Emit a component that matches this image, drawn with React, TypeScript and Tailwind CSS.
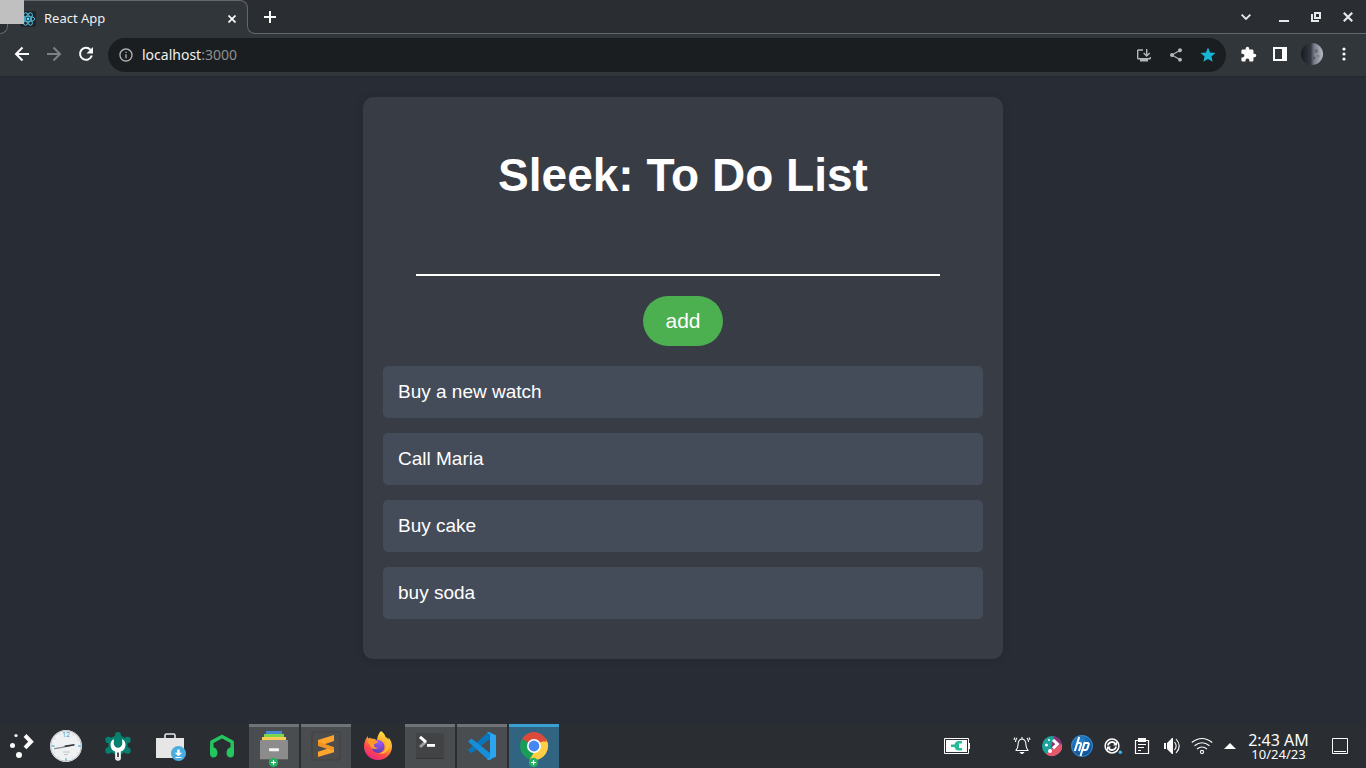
import React, { useState } from "react";
import { MdExtension, MdInfoOutline, MdShare, MdStar } from "react-icons/md";

type IconButtonProps = {
  label: string;
  className?: string;
  children: React.ReactNode;
};

function IconButton({ label, className = "", children }: IconButtonProps) {
  return (
    <button
      type="button"
      aria-label={label}
      className={`flex h-8 w-8 shrink-0 items-center justify-center ${className}`}
    >
      {children}
    </button>
  );
}

function ReactLogo() {
  return (
    <svg viewBox="0 0 16 16" className="h-4 w-4 rounded-xs bg-[#20232a]" aria-hidden="true">
      <g fill="none" stroke="#4fb9d8" strokeWidth="1">
        <ellipse cx="8" cy="8" rx="6.8" ry="2.7" />
        <ellipse cx="8" cy="8" rx="6.8" ry="2.7" transform="rotate(60 8 8)" />
        <ellipse cx="8" cy="8" rx="6.8" ry="2.7" transform="rotate(120 8 8)" />
      </g>
      <circle cx="8" cy="8" r="1.4" fill="#61dafb" />
    </svg>
  );
}

function TabStrip() {
  return (
    <header className="relative flex h-[34px] items-end bg-[#2a2e32]">
      <div className="h-2.5 w-2 bg-[#31363b]">
        <div className="h-full w-full rounded-br-lg border-r border-b border-[#64686c] bg-[#2a2e32]" />
      </div>
      <div className="flex h-full w-60 flex-col">
        <div className="flex flex-1 items-center rounded-t-lg border-t border-r border-[#64686c] bg-[#31363b] pt-2 pr-[7px] pl-3">
          <ReactLogo />
          <a href="#tab" className="ml-2 flex-1 text-[13px] text-[#eff0f1]">
            React App
          </a>
          <button type="button" aria-label="Close tab" className="flex h-4 w-4 items-center justify-center">
            <svg viewBox="0 0 8 8" className="h-2 w-2" stroke="#fcfcfc" strokeWidth="1.7" aria-hidden="true">
              <path d="M.5.5l7 7M7.5.5l-7 7" />
            </svg>
          </button>
        </div>
        <div className="h-2 bg-[#31363b]" />
      </div>
      <div className="-ml-px h-[9px] w-[9px] bg-[#31363b]">
        <div className="h-full w-full rounded-bl-lg border-b border-l border-[#64686c] bg-[#2a2e32]" />
      </div>
      <div className="flex h-full flex-1 items-center border-b border-[#64686c] pr-0.5">
        <button type="button" aria-label="New tab" className="flex h-7 w-7 items-center justify-center">
          <svg viewBox="0 0 12 12" className="h-3 w-3" stroke="#fcfcfc" strokeWidth="2" aria-hidden="true">
            <path d="M6 0v12M0 6h12" />
          </svg>
        </button>
        <div className="ml-auto flex text-[#e6e8ea]">
          <IconButton label="Search tabs" className="mr-[7px]">
            <svg viewBox="0 0 10 6" className="h-1.5 w-2.5" fill="none" stroke="currentColor" strokeWidth="1.8" aria-hidden="true">
              <path d="M.6.6L5 5l4.4-4.4" />
            </svg>
          </IconButton>
          <IconButton label="Minimize" className="-ml-px">
            <svg viewBox="0 0 10 10" className="h-2.5 w-2.5" fill="currentColor" aria-hidden="true">
              <path d="M0 8h10v2H0z" />
            </svg>
          </IconButton>
          <IconButton label="Restore">
            <svg viewBox="0 0 10 10" className="h-2.5 w-2.5" fill="none" stroke="currentColor" strokeWidth="2" aria-hidden="true">
              <path d="M4 1h5v5H4z" />
              <path d="M1 2v7h7" />
            </svg>
          </IconButton>
          <IconButton label="Close window">
            <svg viewBox="0 0 10 10" className="h-2.5 w-2.5" stroke="currentColor" strokeWidth="2.2" aria-hidden="true">
              <path d="M.8.8l8.4 8.4M9.2.8L.8 9.2" />
            </svg>
          </IconButton>
        </div>
      </div>
      <div className="absolute top-0 left-0 h-6 w-6 bg-[#c0c0c0]" />
    </header>
  );
}

function Toolbar() {
  return (
    <nav className="flex items-center border-b border-[#25282c] bg-[#31363b] px-1.5 py-1 text-[#fcfcfc]">
      <div className="flex pb-0.5">
        <IconButton label="Back">
          <svg viewBox="0 0 16 16" className="h-4 w-4" fill="none" stroke="currentColor" strokeWidth="2" aria-hidden="true">
            <path d="M15 8H2.500M8.500 1.500L2 8l6.500 6.500" />
          </svg>
        </IconButton>
        <IconButton label="Forward" className="text-[#7d8184]">
          <svg viewBox="0 0 16 16" className="h-4 w-4" fill="none" stroke="currentColor" strokeWidth="2" aria-hidden="true">
            <path d="M1 8h12.500M7.500 1.500L14 8l-6.500 6.500" />
          </svg>
        </IconButton>
        <IconButton label="Reload">
          <svg viewBox="0 0 16 16" className="h-4 w-4" aria-hidden="true">
            <path d="M12.500 3.800A6 6 0 1 0 13.800 9.500" fill="none" stroke="currentColor" strokeWidth="2" />
            <path d="M15 1v6.500H8.500z" fill="currentColor" />
          </svg>
        </IconButton>
      </div>
      <div className="mx-1.5 flex h-[34px] flex-1 items-center rounded-full bg-[#1b1e20] pr-0.5 pl-2.5 text-[#b4b6b8]">
        <MdInfoOutline size={16} className="text-[#b0b2b4]" />
        <p className="ml-2 flex-1 pb-0.5 text-[14px] text-[#8d8f91]">
          <span className="text-[#eff0f1]">localhost</span>:3000
        </p>
        <IconButton label="Install app">
          <svg viewBox="0 0 14 13" className="h-[13px] w-3.5" fill="none" stroke="currentColor" strokeWidth="1.4" aria-hidden="true">
            <path d="M6 1H1.200q-.5 0-.5.500v7.800q0 .5.5.5h11.600q.5 0 .5-.5V8" />
            <path d="M9.700 0v6.500M6.700 4l3 3 3-3" />
            <path d="M3 10h8v2.500H3z" fill="currentColor" stroke="none" />
          </svg>
        </IconButton>
        <IconButton label="Share">
          <MdShare size={16} />
        </IconButton>
        <IconButton label="Bookmark" className="text-[#16b5d3]">
          <MdStar size={18} />
        </IconButton>
      </div>
      <div className="flex pb-0.5">
        <IconButton label="Extensions">
          <MdExtension size={17} />
        </IconButton>
        <IconButton label="Side panel">
          <svg viewBox="0 0 14 14" className="h-3.5 w-3.5" aria-hidden="true">
            <path d="M0 0h14v14H0zM2 2v10h7V2z" fill="currentColor" fillRule="evenodd" />
          </svg>
        </IconButton>
        <IconButton label="Profile">
          <svg viewBox="0 0 22 22" className="h-[22px] w-[22px]" aria-hidden="true">
            <defs>
              <linearGradient id="moon" x1="0" x2="1">
                <stop offset="0" stopColor="#17191f" />
                <stop offset=".45" stopColor="#353942" />
                <stop offset=".6" stopColor="#787d8a" />
                <stop offset="1" stopColor="#b8bcc6" />
              </linearGradient>
            </defs>
            <circle cx="11" cy="11" r="11" fill="url(#moon)" />
            <circle cx="15" cy="8" r="2" fill="#656b78" />
            <circle cx="17" cy="13" r="1.5" fill="#7b808d" />
            <circle cx="13" cy="15" r="1.5" fill="#555b68" />
          </svg>
        </IconButton>
        <IconButton label="Menu">
          <svg viewBox="0 0 4 14" className="h-3.5 w-1" fill="currentColor" aria-hidden="true">
            <circle cx="2" cy="2" r="1.6" />
            <circle cx="2" cy="7" r="1.6" />
            <circle cx="2" cy="12" r="1.6" />
          </svg>
        </IconButton>
      </div>
    </nav>
  );
}

function TodoCard() {
  const [items, setItems] = useState(["Buy a new watch", "Call Maria", "Buy cake", "buy soda"]);
  const [draft, setDraft] = useState("");

  function addItem(event: React.FormEvent) {
    event.preventDefault();
    if (draft.trim()) {
      setItems([...items, draft.trim()]);
      setDraft("");
    }
  }

  return (
    <section className="w-full max-w-[640px] rounded-[10px] bg-[#383c44] px-5 pt-[50px] pb-10 font-['Liberation_Sans',Arial,sans-serif] text-white shadow-[0_0_10px_rgba(0,0,0,0.1)]">
      <h1 className="text-center text-[46px] leading-[56px] font-bold">Sleek: To Do List</h1>
      <form onSubmit={addItem} className="mt-8 flex flex-col items-center gap-5">
        <input
          aria-label="New task"
          value={draft}
          onChange={(event) => setDraft(event.target.value)}
          className="mr-2.5 h-[41px] w-full max-w-[524px] border-b-2 border-white bg-transparent px-2.5 text-[20px] outline-none"
        />
        <button type="submit" className="h-[50px] w-20 rounded-[25px] bg-[#4caf50] text-[21px]">
          add
        </button>
      </form>
      <ul className="mt-5 flex flex-col gap-[15px]">
        {items.map((item) => (
          <li key={item} className="rounded-[5px] bg-[#454c59] p-[15px] text-[19px] leading-[22px]">
            {item}
          </li>
        ))}
      </ul>
    </section>
  );
}

function PlusBadge({ cx, cy }: { cx: number; cy: number }) {
  return (
    <g>
      <circle cx={cx} cy={cy} r="4.7" fill="#27ae60" />
      <path d={`M${cx - 2.5} ${cy}h5M${cx} ${cy - 2.5}v5`} stroke="#fff" strokeWidth="1.2" />
    </g>
  );
}

function ClockIcon() {
  return (
    <>
      <circle cx="25" cy="22" r="16" fill="#eff1f2" />
      <circle cx="25" cy="22" r="15.3" fill="none" stroke="#c2c6c9" strokeWidth="1" />
      <circle cx="25" cy="22" r="13" fill="none" stroke="#aab0b4" strokeWidth="1" strokeDasharray=".6 6.2" />
      <text x="25" y="12.5" fontSize="7" textAnchor="middle" fill="#3d9cc8">12</text>
      <path d="M10.5 22h3M37 22h3M25 34v3" stroke="#6fb9d9" strokeWidth="1.3" />
      <path d="M22 28h7M23 30.5h4" stroke="#b5babd" strokeWidth=".8" />
      <path d="M13 25l11-2" stroke="#8d9296" strokeWidth="1.2" />
      <path d="M13 24.5L33 21" stroke="#8d9296" strokeWidth=".8" />
      <path d="M23.5 21.5l10-1.5v1.5L24 23.2z" fill="#2f3437" />
    </>
  );
}

function SettingsIcon() {
  return (
    <>
      <g fill="#07806f">
        <path d="M25 10l9.500 5.500v11L25 32l-9.500-5.500v-11z" />
        <circle cx="25" cy="11" r="3" />
        <circle cx="34.500" cy="16" r="3.200" />
        <circle cx="34.500" cy="26.500" r="3.200" />
        <circle cx="15.500" cy="16" r="3.200" />
        <circle cx="15.500" cy="26.500" r="3.200" />
        <circle cx="25" cy="31" r="3" />
      </g>
      <path d="M20.800 15a7 7 0 0 0 1.400 12.500V34a2.800 2.800 0 0 0 5.600 0v-6.500A7 7 0 0 0 29.200 15v4.500a4.200 4.200 0 0 1-8.400 0z" fill="#fff" />
      <path d="M25 28.500V33" stroke="#4d5052" strokeWidth="2" />
      <path d="M22.200 33.500h5.600v1.500q-2.800 1.500-5.600 0z" fill="#d9dcdd" />
    </>
  );
}

function StoreIcon() {
  return (
    <>
      <path d="M20 14v-2.500q0-1.500 1.500-1.500h7q1.500 0 1.500 1.500V14" fill="none" stroke="#e6e6e6" strokeWidth="1.600" />
      <path d="M11 14h28v20H11z" fill="#e6e6e6" />
      <circle cx="33.500" cy="29.500" r="7.500" fill="#4badde" />
      <path d="M32.300 25.500h2.400v3.300h2.600l-3.800 3.500-3.800-3.500h2.600zM30.500 33h6v1h-6z" fill="#fff" />
    </>
  );
}

function HeadphonesIcon() {
  return (
    <>
      <path d="M14.800 29V18L25 12.500 35.200 18v11" fill="none" stroke="#25c55f" strokeWidth="3.400" strokeLinejoin="round" />
      <path d="M13 23.500q7-1 7.500 5 0 5-4.500 5-3-.5-3-4zM37 23.500q-7-1-7.500 5 0 5 4.500 5 3-.5 3-4z" fill="#25c55f" />
    </>
  );
}

function FilesIcon() {
  return (
    <>
      <path d="M17 7h16v3.500H17z" fill="#4489d1" />
      <path d="M15 10h20v3.500H15z" fill="#7bd652" />
      <path d="M13 13h24v4H13z" fill="#fbcb52" />
      <rect x="11" y="16" width="28" height="20" rx="1" fill="#8c8c8c" />
      <path d="M11 35.500h28" stroke="#5f5f5f" />
      <rect x="20" y="24.200" width="10" height="3" rx=".8" fill="#f4f4f4" />
      <PlusBadge cx={24.500} cy={38.500} />
    </>
  );
}

function SublimeIcon() {
  return (
    <>
      <rect x="11" y="8" width="28" height="28" rx="1.500" fill="#4c4c4c" stroke="#3c3e40" strokeWidth=".8" />
      <path d="M17 16l16-5v6l-9.500 3.200L33 23.300v5L17 33v-5.300l9.300-3L17 21.700z" fill="#ffa42c" />
      <path d="M17 21.700v-4l16 5.600v3L26.300 24.700z" fill="#f29422" />
    </>
  );
}

function FirefoxIcon() {
  return (
    <>
      <defs>
        <linearGradient id="flame" x1=".8" y1="0" x2=".25" y2="1">
          <stop offset="0" stopColor="#fff04b" />
          <stop offset=".38" stopColor="#ffab27" />
          <stop offset=".7" stopColor="#ff4a48" />
          <stop offset="1" stopColor="#e9218d" />
        </linearGradient>
        <radialGradient id="globe" cx=".6" cy=".2" r=".9">
          <stop offset="0" stopColor="#a158f3" />
          <stop offset="1" stopColor="#5439b2" />
        </radialGradient>
      </defs>
      <path d="M28 7c2.400 1.400 4 3.800 4.500 6 1.500.6 2.500 1.700 3 2.800.2-1-.1-1.800-.3-2.500C38 16 39 19.500 39 22.500 39 30 33 36 25 36S11 30 11 22.500c0-4.500 1.500-7.500 4-10.500v3c.6-.8 1.300-1.300 2-1.500l1 1.500c2.300-.6 4.500 0 6 1.300.3-4 1.800-7 4-9.300z" fill="url(#flame)" />
      <circle cx="25" cy="22.500" r="6.500" fill="url(#globe)" />
      <path d="M14 15.500c2-1.500 6-1.200 8 .8 1 .7 2.500.5 3 1.200-.3 2-3.500 2-4 3.500-.2 2 1.500 3 4 2.500-2 2.500-7 2-8-2-1-2-3-3-3-6z" fill="#ff982f" />
      <path d="M26 14c5 .5 7.500 4 7.200 8-.4 5-4.500 7.500-8.200 7.300 6 2 11-2.500 11.300-7.500.1-4-2.300-7-5.300-8z" fill="#ffbf35" />
    </>
  );
}

function TerminalIcon() {
  return (
    <>
      <rect x="11" y="9" width="28" height="26" rx="1.500" fill="#414344" />
      <path d="M11.500 34.500h27" stroke="#323435" />
      <path d="M15 23l6-5.300" stroke="#9c9d9e" strokeWidth="3" />
      <path d="M15 12.800l6 5.300" stroke="#fff" strokeWidth="3" />
      <path d="M22 20h8v2.800h-8z" fill="#fff" />
    </>
  );
}

function CodeIcon() {
  return (
    <>
      <path d="M11 26.200l3.500 3L34 14V8.300L31.500 8z" fill="#0876bd" />
      <path d="M11 17.500l3.500-3L34 29.800v5.700l-2.500.5z" fill="#168fda" />
      <path d="M31.500 8L39 11.300v21.400L31.500 36q-1 0-1.500-.8l3-1.700V10.300L30 8.700q.5-.7 1.500-.7z" fill="#2ba5ef" />
    </>
  );
}

function ChromeIcon() {
  return (
    <>
      <path d="M25 22L12.900 15A14 14 0 0 1 37.100 15z" fill="#dc4a3c" />
      <path d="M25 22L12.900 15A14 14 0 0 0 24 36z" fill="#189e57" />
      <path d="M25 22l12.100-7A14 14 0 0 1 24 36z" fill="#ffce44" />
      <path d="M25 15h12.100L38 17.500H25z" fill="#dc4a3c" />
      <path d="M12.900 15L19 25.500l3 2.300z" fill="#189e57" />
      <path d="M31 25.500L24 36l-3.500-.5 4.500-7z" fill="#ffce44" />
      <circle cx="25" cy="22" r="7" fill="#fff" />
      <circle cx="25" cy="22" r="5.400" fill="#4687f4" />
      <PlusBadge cx={24.500} cy={38.500} />
    </>
  );
}

type AppState = "pinned" | "open" | "active";

const appStyles: Record<AppState, string> = {
  pinned: "border-transparent",
  open: "border-[#707376] bg-[#4a4d50]",
  active: "border-[#3a9fd5] bg-[#316480]",
};

const apps: { name: string; state: AppState; icon: React.ReactNode }[] = [
  { name: "Clock", state: "pinned", icon: <ClockIcon /> },
  { name: "System settings", state: "pinned", icon: <SettingsIcon /> },
  { name: "Software store", state: "pinned", icon: <StoreIcon /> },
  { name: "Music", state: "pinned", icon: <HeadphonesIcon /> },
  { name: "Files", state: "open", icon: <FilesIcon /> },
  { name: "Sublime Text", state: "open", icon: <SublimeIcon /> },
  { name: "Firefox", state: "pinned", icon: <FirefoxIcon /> },
  { name: "Terminal", state: "open", icon: <TerminalIcon /> },
  { name: "Visual Studio Code", state: "open", icon: <CodeIcon /> },
  { name: "Chrome", state: "active", icon: <ChromeIcon /> },
];

const trayItems: { name: string; icon: React.ReactNode }[] = [
  {
    name: "Notifications",
    icon: (
      <g fill="none" stroke="#fcfcfc" strokeWidth="1.1">
        <path d="M8.500 26.500h13M9 26q2-2 2-5 0-5.500 4-6 4 .5 4 6 0 3 2 5M15 15v-2M10 14q-1.500 1.500-1.500 4M8 13.500q-.9 1-.9 2.500M20 14q1.500 1.500 1.500 4M22 13.500q.9 1 .9 2.500" />
        <path d="M13.500 28.500h3q-1.500 2-3 0z" fill="#fcfcfc" />
      </g>
    ),
  },
  {
    name: "Plasma",
    icon: (
      <>
        <circle cx="15" cy="22" r="10" fill="#1ba39c" />
        <path d="M24.700 19.500A10 10 0 0 1 9 30l8-8z" fill="#e4586c" />
        <path d="M17 12.200a10 10 0 0 1 7.700 7.300L17 25l-3-2z" fill="#8e2f75" />
        <path d="M16 15.800l4.500 4.300-4.500 4.300" fill="none" stroke="#fff" strokeWidth="3" />
        <circle cx="12" cy="16" r="1" fill="#fff" />
        <circle cx="9.500" cy="21" r="1.500" fill="#fff" />
        <circle cx="13" cy="27" r="2" fill="#fff" />
      </>
    ),
  },
  {
    name: "HP",
    icon: (
      <>
        <defs>
          <radialGradient id="hpBlue" cx=".4" cy=".3" r=".8">
            <stop offset="0" stopColor="#2b86cc" />
            <stop offset="1" stopColor="#05478e" />
          </radialGradient>
        </defs>
        <circle cx="15" cy="22" r="11" fill="url(#hpBlue)" />
        <circle cx="15" cy="22" r="10.400" fill="none" stroke="#3d8cca" />
        <g fill="none" stroke="#fff" strokeWidth="2">
          <path d="M12.200 13L7.800 27M10.300 19h2.500q1.600 0 1.200 1.500L12 27" />
          <path d="M17.800 18L13.500 32M17.500 19h3q1.700 0 1.200 1.600l-1.400 4.200q-.4 1.200-1.800 1.200H15.500" />
        </g>
      </>
    ),
  },
  {
    name: "Updates",
    icon: (
      <>
        <circle cx="15" cy="22" r="6.900" fill="none" stroke="#fcfcfc" strokeWidth="1.500" />
        <path d="M11 21.500a4 4 0 0 1 7.300-1.700M19 22.500a4 4 0 0 1-7.300 1.700" fill="none" stroke="#fcfcfc" strokeWidth="1.800" />
        <path d="M20 17.500v4h-4zM10 26.500v-4h4z" fill="#fcfcfc" />
        <circle cx="23.300" cy="28.300" r="1.800" fill="#3daee9" />
      </>
    ),
  },
  {
    name: "Clipboard",
    icon: (
      <>
        <path d="M8.500 16.500h13v13h-13z" fill="none" stroke="#fcfcfc" strokeWidth="1.200" />
        <path d="M11 14h8v4h-8z" fill="#fcfcfc" />
        <path d="M11 20.500h8M11 23.500h6M11 26.500h3" stroke="#fcfcfc" strokeWidth="1.100" />
      </>
    ),
  },
  {
    name: "Volume",
    icon: (
      <>
        <path d="M7 19h2v6H7zM10 19l5-5h1v16h-1l-5-5z" fill="#fcfcfc" />
        <path d="M17.500 18q3.300 4 0 8M19 15q6.500 7 0 14" fill="none" stroke="#fcfcfc" strokeWidth="1.100" />
      </>
    ),
  },
  {
    name: "Network",
    icon: (
      <g fill="none" stroke="#fcfcfc" strokeWidth="1.100">
        <circle cx="15" cy="28" r="1.600" />
        <path d="M10 25q5-4 10 0M7.500 21.800q7.500-6 15 0M4.800 18.500q10.200-8 20.400 0" />
      </g>
    ),
  },
];

function Taskbar() {
  return (
    <footer className="flex h-11 items-stretch bg-[#2a2e32] text-[#fcfcfc]">
      <div className="flex gap-0.5">
        <button type="button" aria-label="Application launcher" className="w-[39px]">
          <svg viewBox="0 0 39 44" className="h-11 w-[39px]" aria-hidden="true">
            <path d="M25 11.500l6 6.200-6 6.200" fill="none" stroke="#fcfcfc" strokeWidth="4" />
            <circle cx="16" cy="11.500" r="1.600" fill="#fcfcfc" />
            <circle cx="12.500" cy="21.500" r="2.500" fill="#fcfcfc" />
            <circle cx="19" cy="31" r="3" fill="#fcfcfc" />
          </svg>
        </button>
        {apps.map((app) => (
          <button
            key={app.name}
            type="button"
            aria-label={app.name}
            className={`h-11 w-[50px] border-t-[3px] ${appStyles[app.state]}`}
          >
            <svg viewBox="0 3 50 41" className="h-[41px] w-[50px]" aria-hidden="true">
              {app.icon}
            </svg>
          </button>
        ))}
      </div>
      <div className="ml-auto flex">
        <button type="button" aria-label="Battery" className="mr-[35px] w-[30px]">
          <svg viewBox="0 0 30 44" className="h-11 w-[30px]" aria-hidden="true">
            <path d="M2.500 14.500h24v15h-24z" fill="none" stroke="#fcfcfc" />
            <path d="M4 16h21v12H4zM27 19h1v6h-1z" fill="#fcfcfc" />
            <path d="M9 20.500h3.500q1-3.500 4-3.500H20v2.500h-3.500v4.500H20v2.500h-3.500q-3 0-4-3.500H9z" fill="#27bb98" />
            <path d="M14 18h3v8h-3z" fill="#27bb98" />
          </svg>
        </button>
        {trayItems.map((item) => (
          <button key={item.name} type="button" aria-label={item.name} className="w-[30px]">
            <svg viewBox="0 0 30 44" className="h-11 w-[30px]" aria-hidden="true">
              {item.icon}
            </svg>
          </button>
        ))}
        <button type="button" aria-label="Show hidden icons" className="flex w-[26px] items-center justify-center">
          <svg viewBox="0 0 12 6" className="h-1.5 w-3" fill="#fcfcfc" aria-hidden="true">
            <path d="M6 0l6 6H0z" />
          </svg>
        </button>
        <p className="flex w-[71px] flex-col items-center justify-center text-[16px] leading-4">
          2:43 AM
          <span className="text-[13px] leading-[13px]">10/24/23</span>
        </p>
        <button type="button" aria-label="Show desktop" className="flex w-[52px] items-center justify-center">
          <svg viewBox="0 0 16 16" className="h-4 w-4" fill="none" stroke="#fcfcfc" aria-hidden="true">
            <path d="M.5.5h15v15H.5zM2 13.500h12" />
          </svg>
        </button>
      </div>
    </footer>
  );
}

export default function App() {
  return (
    <div className="flex min-h-screen flex-col bg-[#282c34] font-['Noto_Sans',sans-serif]">
      <TabStrip />
      <Toolbar />
      <main className="flex flex-1 items-start justify-center px-5 py-5">
        <TodoCard />
      </main>
      <Taskbar />
    </div>
  );
}
